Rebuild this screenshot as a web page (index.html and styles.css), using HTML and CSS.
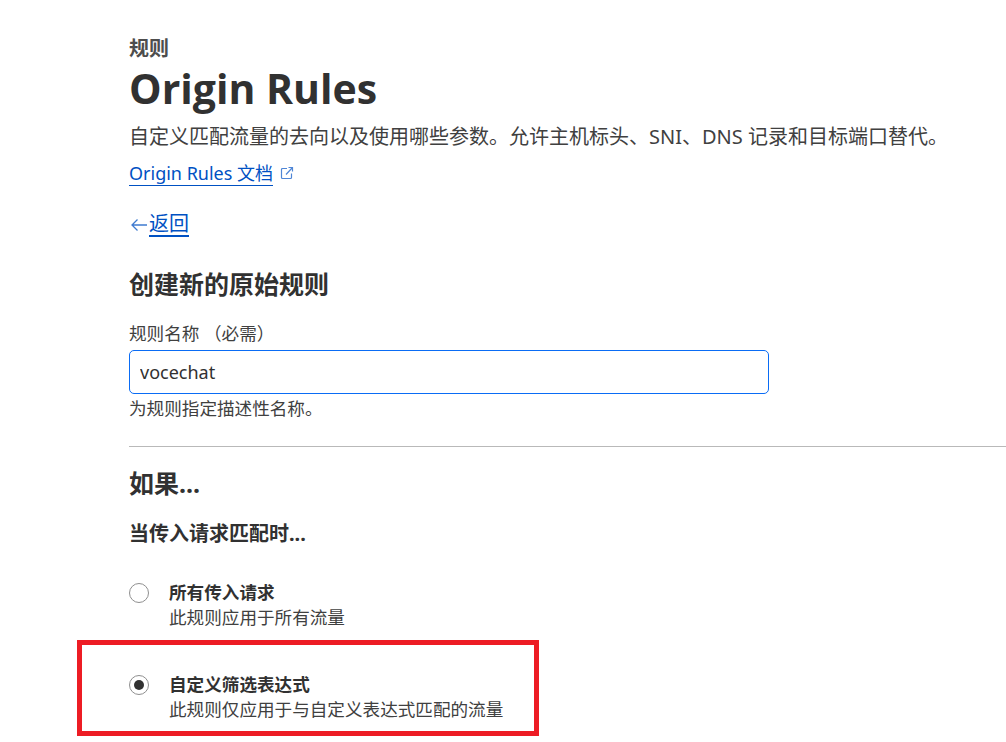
FILE: index.html
```html
<!DOCTYPE html>
<html lang="zh">
<head>
<meta charset="utf-8">
<title>Origin Rules</title>
<link rel="stylesheet" href="styles.css">
</head>
<body>
<main class="page">
  <header class="head">
    <div class="eyebrow">规则</div>
    <h1 class="title">Origin Rules</h1>
    <p class="desc">自定义匹配流量的去向以及使用哪些参数。允许主机标头、SNI、DNS 记录和目标端口替代。</p>
    <div class="doc-row">
      <a class="link" href="#">Origin Rules 文档</a>
      <svg class="ext" width="14" height="14" viewBox="0 0 14 14" fill="none" stroke="#4f86d6" stroke-width="1.2"><path d="M7 2.500H2.500a1 1 0 0 0-1 1V11.500a1 1 0 0 0 1 1h8a1 1 0 0 0 1-1V7.500"/><path d="M6 8.500 12.500 1.500M8.500 1.500h4v4"/></svg>
    </div>
  </header>
  <div class="back">
    <svg class="arrow" width="20" height="16" viewBox="0 0 20 16" fill="none" stroke="#3f7bd0" stroke-width="1.300"><path d="M18 8H3M8.500 2.500 3 8l5.500 5.500"/></svg>
    <a class="link" href="#">返回</a>
  </div>
  <form class="form">
    <h2 class="h2 create">创建新的原始规则</h2>
    <label class="label" for="name">规则名称 （必需）</label>
    <input class="input" id="name" type="text" value="vocechat">
    <div class="hint">为规则指定描述性名称。</div>
    <hr class="rule">
    <h2 class="h2 if">如果...</h2>
    <div class="when">当传入请求匹配时...</div>
    <div class="radio-row first">
      <span class="radio"></span>
      <div class="radio-text"><strong>所有传入请求</strong><span>此规则应用于所有流量</span></div>
    </div>
    <div class="radio-row second">
      <span class="radio on"></span>
      <div class="radio-text"><strong>自定义筛选表达式</strong><span>此规则仅应用于与自定义表达式匹配的流量</span></div>
    </div>
  </form>
</main>
<div class="mark"></div>
</body>
</html>
```

FILE: styles.css
```css
html, body { margin: 0; padding: 0; background: #fff; height: 742px; overflow: hidden; }
body { position: relative; color: #313131; font-family: "Noto Sans", "Noto Sans CJK SC", sans-serif; font-size: 16px; }
.page { padding: 37px 0 0 129px; }
.eyebrow { font-size: 20px; line-height: 24px; font-weight: 700; color: #4d4d4d; }
.title { margin: 1px 0 0; font-family: "Open Sans", "Noto Sans", sans-serif; font-size: 41px; line-height: 52px; font-weight: 700; color: #313131; }
.desc { margin: 0; padding-top: 9px; font-size: 20px; line-height: 28px; color: #404040; white-space: nowrap; }
.doc-row { display: flex; align-items: center; gap: 7px; margin-top: 7px; height: 30px; }
.link { color: #0051c3; text-decoration: none; font-size: 18px; line-height: 24px; border-bottom: 1px solid #0051c3; }
.back { display: flex; align-items: center; margin-top: 22px; height: 30px; }
.back .link { font-size: 20px; border-bottom-width: 2px; line-height: 22px; }
.h2 { margin: 0; font-size: 25px; line-height: 32px; font-weight: 700; color: #313131; }
.create { margin-top: 28px; }
.label { display: block; margin-top: 21px; font-size: 17.6px; line-height: 24px; color: #404040; }
.input { display: block; box-sizing: border-box; width: 640px; height: 44px; margin-top: 5px; padding: 0 10px; border: 1px solid #0a6cf5; border-radius: 5px; font: inherit; font-size: 18px; color: #313131; outline: none; }
.hint { margin-top: 1px; font-size: 17.6px; line-height: 26px; color: #404040; }
.rule { margin: 25px 0 0; border: 0; border-top: 1px solid #b9b9b9; }
.if { margin-top: 20px; }
.when { margin-top: 22px; font-size: 20px; line-height: 26px; font-weight: 700; color: #313131; }
.radio-row { display: flex; align-items: flex-start; gap: 20px; }
.first { margin-top: 33px; }
.second { margin-top: 43px; }
.radio { box-sizing: border-box; flex: none; width: 20px; height: 20px; margin-top: 3px; border: 1px solid #8f8f8f; border-radius: 50%; background: #fff; display: flex; align-items: center; justify-content: center; }
.radio.on::after { content: ""; width: 10px; height: 10px; border-radius: 50%; background: #313131; }
.radio-text { display: flex; flex-direction: column; font-size: 17.6px; line-height: 24px; }
.radio-text strong { font-weight: 700; color: #313131; }
.radio-text span { color: #404040; margin-top: 1px; }
.mark { position: absolute; left: 77px; top: 640px; width: 462px; height: 96px; box-sizing: border-box; border: 5px solid #ed1c24; }
```
